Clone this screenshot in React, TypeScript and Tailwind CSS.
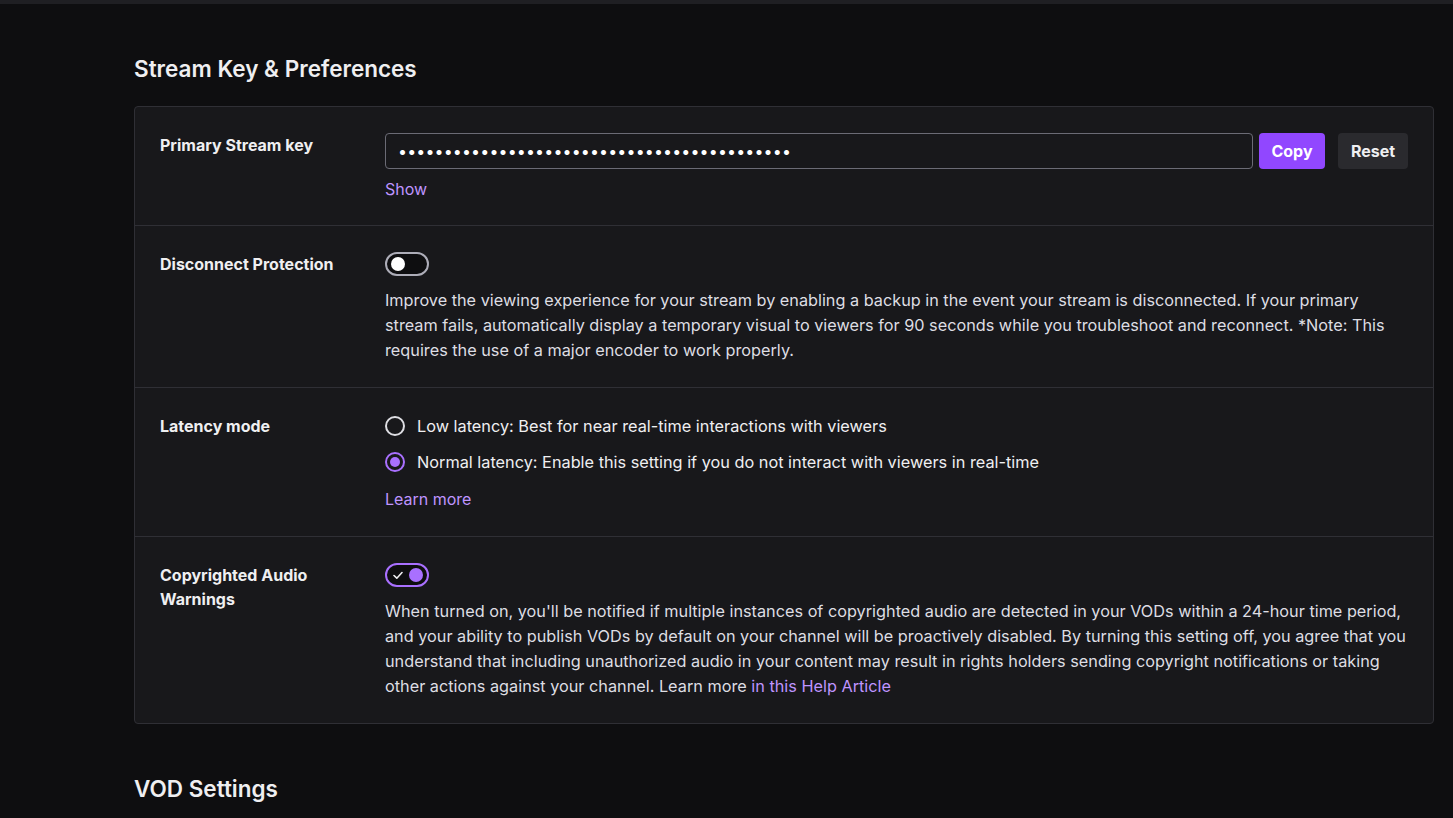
import { useState } from "react";

const FONT = { fontFamily: "Inter, 'Noto Sans', 'Liberation Sans', sans-serif" };

function Toggle({ on }: { on: boolean }) {
  if (on) {
    return (
      <div className="relative h-[24px] w-[44px] rounded-full border-2 border-[#a970ff] bg-[#0e0e10]">
        <svg className="absolute left-[6px] top-[6px]" width="10" height="9" viewBox="0 0 10 9" fill="none">
          <path d="M1 4.5 L3.8 7.2 L9 1.5" stroke="#efeff1" strokeWidth="1.6" strokeLinecap="round" strokeLinejoin="round" />
        </svg>
        <div className="absolute right-[4px] top-[3px] h-[14px] w-[14px] rounded-full bg-[#a970ff]" />
      </div>
    );
  }
  return (
    <div className="relative h-[24px] w-[44px] rounded-full border-2 border-[#adadb8] bg-[#0e0e10]">
      <div className="absolute left-[4px] top-[3px] h-[14px] w-[14px] rounded-full bg-white" />
    </div>
  );
}

function Radio({ checked, label }: { checked: boolean; label: string }) {
  return (
    <div className="flex h-[20px] items-center gap-3">
      <div
        className={
          checked
            ? "flex h-[20px] w-[20px] items-center justify-center rounded-full border-2 border-[#a970ff]"
            : "h-[20px] w-[20px] rounded-full border-2 border-[#dedee3]"
        }
      >
        {checked && <div className="h-[10px] w-[10px] rounded-full bg-[#a970ff]" />}
      </div>
      <span className="text-[16.3px] text-[#efeff1]">{label}</span>
    </div>
  );
}

function Row({
  label,
  children,
  pb = "pb-[26px]",
  last,
}: {
  label: React.ReactNode;
  children: React.ReactNode;
  pb?: string;
  last?: boolean;
}) {
  return (
    <div className={"grid grid-cols-[225px_1fr] px-[25px] pt-[26px] " + pb + (last ? "" : " border-b border-[#2f2f35]")}>
      <div className="text-[16px] font-bold leading-[24px] text-[#efeff1]">{label}</div>
      <div>{children}</div>
    </div>
  );
}

export default function App() {
  const [latency] = useState("normal");
  return (
    <div style={FONT} className="min-h-[818px] bg-[#0e0e10] text-[#efeff1]">
      <div className="h-[4px] bg-[#1f1f23]" />
      <div className="pl-[134px] pr-[19px] pt-[50px] pb-[20px]">
        <h2 className="text-[22.5px] font-semibold leading-[30px] text-[#efeff1]">Stream Key &amp; Preferences</h2>
        <div className="mt-[22px] rounded-[4px] border border-[#2f2f35] bg-[#18181b]">
          <Row label="Primary Stream key">
            <div className="flex items-center">
              <div className="flex h-[36px] flex-1 items-center rounded-[4px] border border-[#6b6b75] bg-[#18181b] px-[12px]">
                <span className="text-[16px] tracking-[0.14px] text-white">{"•".repeat(43)}</span>
              </div>
              <button className="ml-[6px] h-[36px] w-[66px] rounded-[4px] bg-[#9147ff] text-[16px] font-bold text-white">Copy</button>
              <button className="ml-[13px] h-[36px] w-[70px] rounded-[4px] bg-[#2a2a2e] text-[16px] font-bold text-[#efeff1]">Reset</button>
            </div>
            <div className="mt-[10px] text-[16px] leading-[20px] text-[#bf94ff]">Show</div>
          </Row>
          <Row label="Disconnect Protection" pb="pb-[24px]">
            <Toggle on={false} />
            <p className="mt-[12px] text-[16.25px] leading-[25px] text-[#dedee3]">
              Improve the viewing experience for your stream by enabling a backup in the event your stream is disconnected. If your primary stream fails, automatically display a temporary visual to viewers for 90 seconds while you troubleshoot and reconnect. *Note: This requires the use of a major encoder to work properly.
            </p>
          </Row>
          <Row label="Latency mode" pb="pb-[27px]">
            <div className="flex flex-col gap-[16px] pt-[2px]">
              <Radio checked={latency === "low"} label="Low latency: Best for near real-time interactions with viewers" />
              <Radio checked={latency === "normal"} label="Normal latency: Enable this setting if you do not interact with viewers in real-time" />
            </div>
            <div className="mt-[17px] text-[16px] leading-[20px] text-[#bf94ff]">Learn more</div>
          </Row>
          <Row label={<>Copyrighted Audio<br />Warnings</>} pb="pb-[24px]" last>
            <Toggle on />
            <p className="mt-[12px] text-[16.25px] leading-[25px] text-[#dedee3]">
              When turned on, you'll be notified if multiple instances of copyrighted audio are detected in your VODs within a 24-hour time period, and your ability to publish VODs by default on your channel will be proactively disabled. By turning this setting off, you agree that you understand that including unauthorized audio in your content may result in rights holders sending copyright notifications or taking other actions against your channel. Learn more <a className="text-[#bf94ff]">in this Help Article</a>
            </p>
          </Row>
        </div>
        <h2 className="mt-[50px] text-[22.5px] font-semibold leading-[30px] text-[#efeff1]">VOD Settings</h2>
      </div>
    </div>
  );
}
